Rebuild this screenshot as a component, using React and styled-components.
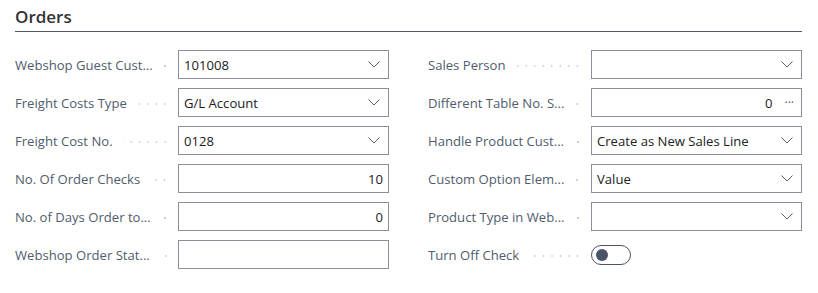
import React from "react"
import styled, { createGlobalStyle } from "styled-components"

const GlobalStyle = createGlobalStyle`
  body {
    margin: 0;
    background: #ffffff;
    font-family: "Segoe UI", "Open Sans", "Noto Sans", sans-serif;
  }
`

const leftFields = [
  { label: "Webshop Guest Cust...", kind: "select", value: "101008" },
  { label: "Freight Costs Type", kind: "select", value: "G/L Account" },
  { label: "Freight Cost No.", kind: "select", value: "0128" },
  { label: "No. Of Order Checks", kind: "number", value: "10" },
  { label: "No. of Days Order to...", kind: "number", value: "0" },
  { label: "Webshop Order Stat...", kind: "text", value: "" },
]

const rightFields = [
  { label: "Sales Person", kind: "select", value: "" },
  { label: "Different Table No. S...", kind: "lookup", value: "0" },
  { label: "Handle Product Cust...", kind: "select", value: "Create as New Sales Line" },
  { label: "Custom Option Elem...", kind: "select", value: "Value" },
  { label: "Product Type in Web...", kind: "select", value: "" },
  { label: "Turn Off Check", kind: "toggle", value: false },
]

const Chevron = () => (
  <svg width="12" height="7" viewBox="0 0 12 7" fill="none">
    <path d="M0.5 0.5 L6 6 L11.5 0.5" stroke="#605e5c" strokeWidth="1" />
  </svg>
)

const FieldInput = ({ kind, value }) => {
  if (kind === "toggle") {
    return (
      <Toggle>
        <Knob $on={value} />
      </Toggle>
    )
  }
  return (
    <InputBox>
      <Value $numeric={kind === "number" || kind === "lookup"}>{value}</Value>
      {kind === "select" && (
        <Trail>
          <Chevron />
        </Trail>
      )}
      {kind === "lookup" && <Dots>···</Dots>}
    </InputBox>
  )
}

const Column = ({ fields }) => (
  <Fields>
    {fields.map(f => (
      <Row key={f.label}>
        <Label>
          <LabelText>{f.label}</LabelText>
          <Leader />
        </Label>
        <FieldInput kind={f.kind} value={f.value} />
      </Row>
    ))}
  </Fields>
)

const App = () => {
  return (
    <>
      <GlobalStyle />
      <Page>
        <Title>Orders</Title>
        <Grid>
          <Column fields={leftFields} />
          <Column fields={rightFields} />
        </Grid>
      </Page>
    </>
  )
}

const Page = styled.div`
  padding: 6px 16px 0 15px;
`

const Title = styled.h2`
  margin: 0;
  font-size: 17px;
  font-weight: 600;
  line-height: 22px;
  color: #333333;
  padding-bottom: 3px;
  border-bottom: 1px solid #505866;
`

const Grid = styled.div`
  margin-top: 18px;
  display: grid;
  grid-template-columns: repeat(2, minmax(0, 1fr));
  column-gap: 39px;
`

const Fields = styled.div`
  display: flex;
  flex-direction: column;
  gap: 9px;
`

const Row = styled.div`
  display: flex;
  align-items: center;
  height: 29px;
`

const Label = styled.div`
  flex: 0 0 163px;
  min-width: 0;
  display: flex;
  align-items: center;
  padding-right: 9px;
  box-sizing: border-box;
  font-size: 13.1px;
  color: #505c6d;
  white-space: nowrap;
  overflow: hidden;
`

const LabelText = styled.span`
  flex: 0 0 auto;
`

const Leader = styled.span`
  flex: 1 1 auto;
  height: 2px;
  margin-left: 10px;
  margin-top: 2px;
  background-image: radial-gradient(circle, #c9ccd1 0.9px, transparent 1.1px);
  background-size: 8.5px 2px;
  background-position: right center;
  background-repeat: repeat-x;
`

const InputBox = styled.div`
  flex: 0 0 211px;
  height: 29px;
  box-sizing: border-box;
  border: 1px solid #8a9099;
  display: flex;
  align-items: center;
  padding: 0 5px 0 5px;
  font-size: 13.1px;
  color: #212121;
`

const Value = styled.span`
  flex: 1 1 auto;
  text-align: ${p => (p.$numeric ? "right" : "left")};
  white-space: nowrap;
  overflow: hidden;
`

const Trail = styled.span`
  display: flex;
  align-items: center;
  padding: 0 3px 0 8px;
`

const Dots = styled.span`
  padding: 0 2px 0 12px;
  color: #505c6d;
  font-size: 12px;
`

const Toggle = styled.div`
  width: 40px;
  height: 20px;
  box-sizing: border-box;
  border: 1px solid #4b5366;
  border-radius: 10px;
  display: flex;
  align-items: center;
  padding: 0 4px;
`

const Knob = styled.span`
  width: 12px;
  height: 12px;
  border-radius: 50%;
  background: #4b5366;
  margin-left: ${p => (p.$on ? "auto" : "0")};
`

export default App
